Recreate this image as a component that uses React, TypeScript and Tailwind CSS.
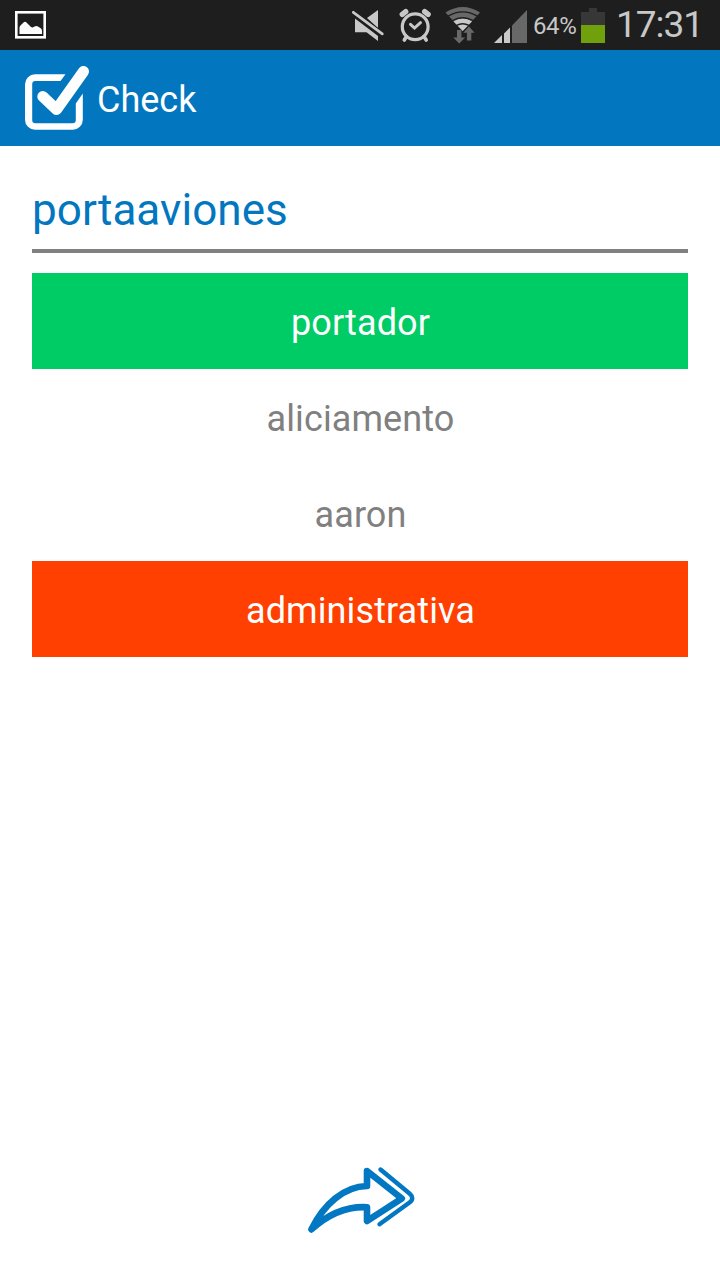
import React from "react";

type Answer = { word: string; tone: string };

const answers: Answer[] = [
  { word: "portador", tone: "bg-[#00cc66] text-white" },
  { word: "aliciamento", tone: "text-[#808080]" },
  { word: "aaron", tone: "text-[#808080]" },
  { word: "administrativa", tone: "bg-[#ff4000] text-white" },
];

function PictureIcon() {
  return (
    <svg width="32" height="30" viewBox="15 10 32 30">
      <rect x="16.3" y="12.3" width="28.4" height="25" fill="none" stroke="#fff" strokeWidth="2.6" />
      <path d="M19.500 34v-6.500q0-1.500 2-3l2-2q1.500-1.500 3 0l4.500 4.500q1.500 1 3.500-.5 2-1 3.500 0l3 2q1 .8 1 2.500v3z" fill="#fff" />
    </svg>
  );
}

function MutedIcon() {
  return (
    <svg width="34" height="34" viewBox="351 9 34 34">
      <path d="M367 18 378 10v18zM355 18.500 378 36V41L366.500 32.300H355z" fill="#c8c8c8" />
      <path d="M352 11.500 384 35.500" stroke="#1e1e1e" strokeWidth="5" />
      <path d="M353.300 12.300 382.300 33.900" stroke="#c8c8c8" strokeWidth="2.700" strokeLinecap="round" />
    </svg>
  );
}

function AlarmIcon() {
  return (
    <svg width="34" height="36" viewBox="398 7 34 36" fill="none" stroke="#c8c8c8" strokeLinecap="round">
      <circle cx="415.200" cy="26.700" r="12.900" strokeWidth="3.200" />
      <path d="m402.300 14.300 3.400-2.600M424.700 11.700l3.400 2.600" strokeWidth="5.400" />
      <path d="m406.500 36.500-2.200 3.500M424 36.500l2.200 3.500" strokeWidth="3.600" />
      <path d="m410.500 24.300 4 3.700 6-5.300" strokeWidth="3" />
    </svg>
  );
}

function WifiIcon() {
  return (
    <svg width="36" height="38" viewBox="445 6 36 38" fill="none">
      <path d="M445.500 12.500Q462.700 1.500 480 12.500L462.700 31z" fill="#686868" />
      <path d="M453.500 21.500Q462.700 15 472 21.500L462.700 31z" fill="#c8c8c8" />
      <path d="M448 16.200Q462.700 7.500 477.500 16.200M452.500 20.500Q462.700 15 473 20.500M456.500 25.400Q462.700 22 469 25.400" stroke="#1e1e1e" strokeWidth="1.400" />
      <path d="M457 30h4.400v7.500h3.800L459.200 43.500l-6-6H457zM466.900 40.500h4.400v-7.700h3.300L469 26.500l-5.700 6.300h3.600z" fill="#686868" />
    </svg>
  );
}

function SignalIcon() {
  return (
    <svg width="34" height="34" viewBox="494 9 34 34">
      <path d="m494 43 8-8v8zM504 33.500l6-6V43h-6z" fill="#c8c8c8" />
      <path d="M512 25.500 527 10v33h-15z" fill="#686868" />
    </svg>
  );
}

function CheckLogo() {
  return (
    <svg width="66" height="66" viewBox="24 65 66 66" fill="none" stroke="#fff">
      <path
        d="M65.500 74.200H35a10 10 0 0 0-10 10v35.600a10 10 0 0 0 10 10h37.800a10 10 0 0 0 10-10V93.500l-7 10v16.500a3.200 3.200 0 0 1-3.200 3.200H35.400a3.200 3.200 0 0 1-3.200-3.200V84.300a3.200 3.200 0 0 1 3.200-3.200H60.500z"
        fill="#fff"
        stroke="none"
      />
      <path d="m42.800 96.500 13.700 13L83.500 71.500" strokeWidth="11" strokeLinecap="round" strokeLinejoin="round" />
    </svg>
  );
}

function NextIcon() {
  return (
    <svg width="110" height="68" viewBox="306 1166 110 68" fill="none" stroke="#0277c2" strokeLinecap="round" strokeLinejoin="round">
      <path d="M311.400 1229.400C324 1204 344 1186.500 367 1186V1171L401.800 1198.500 367 1221V1207.200C344 1206 325 1217 311.400 1229.400Z" strokeWidth="6.600" />
      <path d="M380.500 1169.500 409.500 1193.500Q415 1198.300 409.500 1202.500L379.500 1224.300" strokeWidth="4.400" />
    </svg>
  );
}

export default function App() {
  return (
    <div className="flex h-[1280px] w-[720px] flex-col overflow-hidden bg-white font-[Roboto,sans-serif]">
      <header className="flex h-[50px] shrink-0 items-start bg-[#1e1e1e] text-[#c8c8c8]">
        <div className="pt-[10px] pl-[15px]"><PictureIcon /></div>
        <div className="ml-auto flex pr-[19px]">
          <div className="mt-[9px] mr-[13px]"><MutedIcon /></div>
          <div className="mt-[7px] mr-[13px]"><AlarmIcon /></div>
          <div className="mt-[6px] mr-[13px]"><WifiIcon /></div>
          <div className="mt-[9px] mr-[5px]"><SignalIcon /></div>
          <span className="mt-[10px] w-[48px] text-[24px] leading-[32px] tracking-[-0.4px]">64%</span>
          <svg className="mt-[8px] mr-[11px]" width="24" height="35" viewBox="581 8 24 35">
            <path d="M589 8h8v4h8v13h-24V12h8z" fill="#373737" />
            <path d="M581 25h24v18h-24z" fill="#70a00c" />
          </svg>
          <time className="mt-[2px] w-[85px] text-[37px] leading-[46px] tracking-[-1px] whitespace-nowrap">17:31</time>
        </div>
      </header>
      <div className="flex h-[96px] shrink-0 items-center bg-[#0277c0] pl-[24px] text-white">
        <CheckLogo />
        <h1 className="ml-[7px] pt-1 text-[36px] leading-[42px]">Check</h1>
      </div>
      <main className="flex flex-1 flex-col px-8 pt-[27px]">
        <h2 className="h-[80px] border-b-4 border-[#808080] pt-[11px] text-[44px] leading-[52px] tracking-[0.05px] text-[#0277c0]">portaaviones</h2>
        <ul className="mt-5">
          {answers.map(({ word, tone }) => (
            <li key={word} className={`flex h-24 items-center justify-center pt-1 pl-px text-[36px] leading-[42px] tracking-[0.1px] ${tone}`}>
              {word}
            </li>
          ))}
        </ul>
      </main>
      <footer className="flex h-[114px] shrink-0 items-start pl-[306px]">
        <button aria-label="Siguiente"><NextIcon /></button>
      </footer>
    </div>
  );
}
